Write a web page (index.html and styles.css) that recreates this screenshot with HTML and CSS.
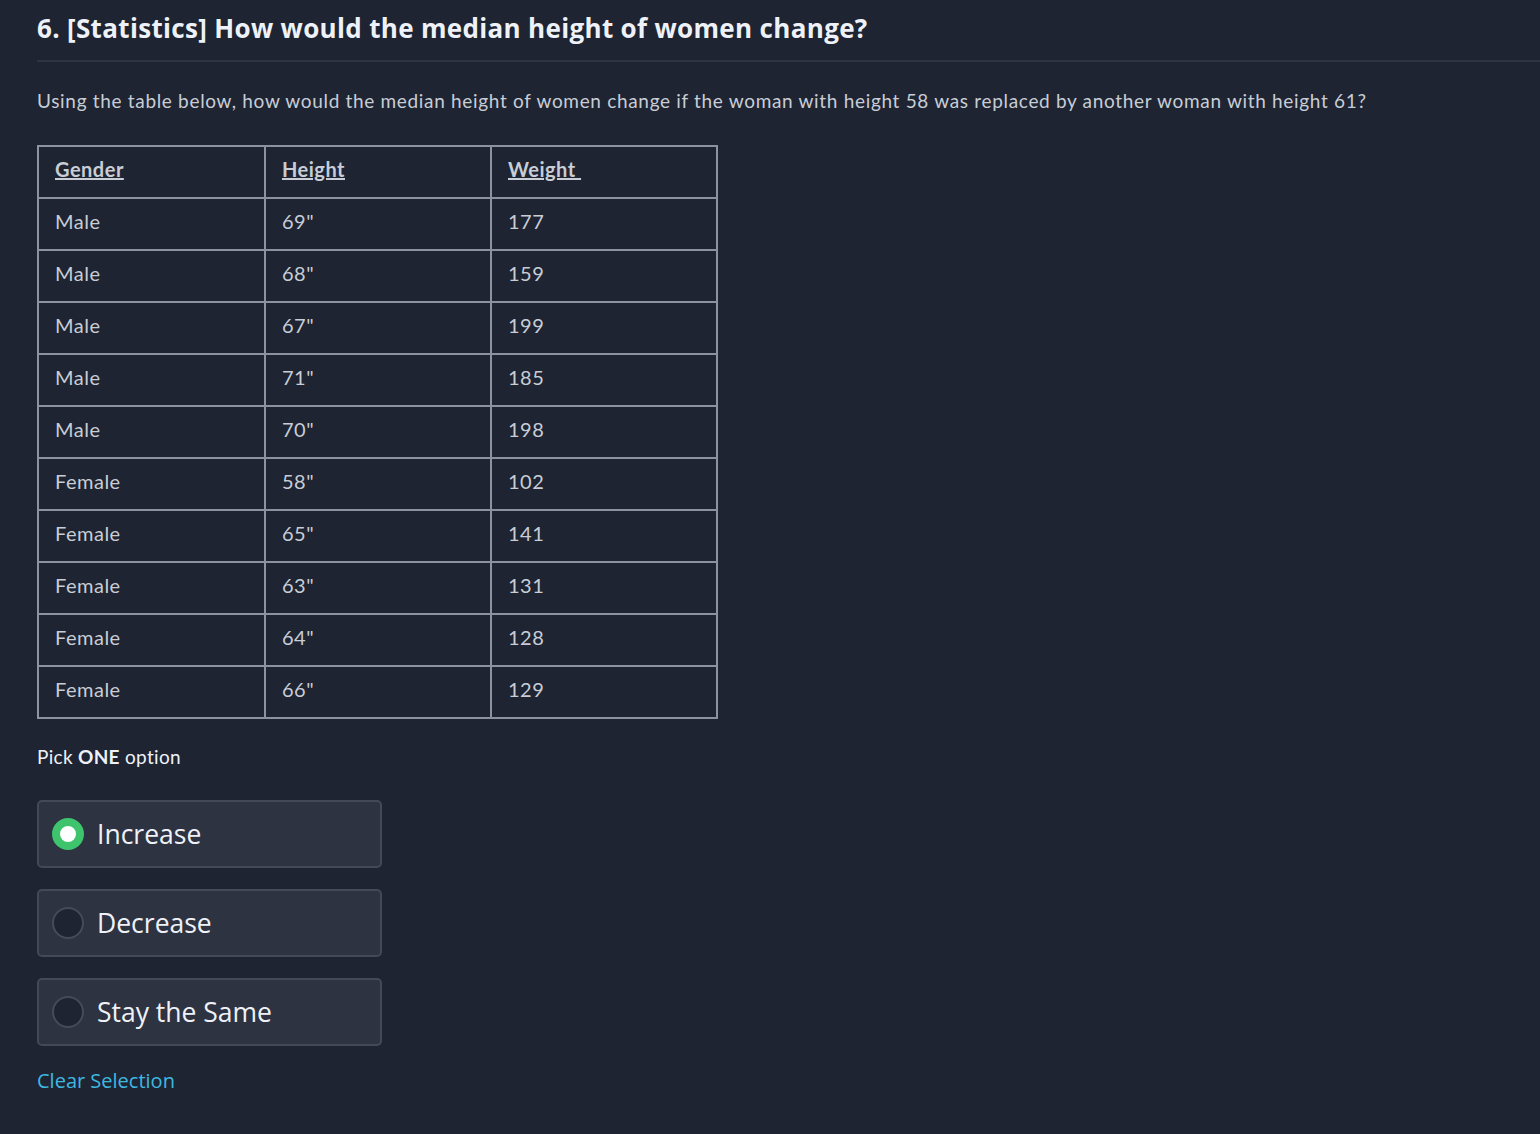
FILE: index.html
```html
<!DOCTYPE html>
<html>
<head>
<meta charset="utf-8">
<link rel="stylesheet" href="styles.css">
</head>
<body>
<div class="page">
  <h1 class="title">6. [Statistics] How would the median height of women change?</h1>
  <div class="divider"></div>
  <p class="question">Using the table below, how would the median height of women change if the woman with height 58 was replaced by another woman with height 61?</p>
  <table class="data">
    <thead>
      <tr><th><u>Gender</u></th><th><u>Height</u></th><th><u>Weight&nbsp;</u></th></tr>
    </thead>
    <tbody>
      <tr><td>Male</td><td>69"</td><td>177</td></tr>
      <tr><td>Male</td><td>68"</td><td>159</td></tr>
      <tr><td>Male</td><td>67"</td><td>199</td></tr>
      <tr><td>Male</td><td>71"</td><td>185</td></tr>
      <tr><td>Male</td><td>70"</td><td>198</td></tr>
      <tr><td>Female</td><td>58"</td><td>102</td></tr>
      <tr><td>Female</td><td>65"</td><td>141</td></tr>
      <tr><td>Female</td><td>63"</td><td>131</td></tr>
      <tr><td>Female</td><td>64"</td><td>128</td></tr>
      <tr><td>Female</td><td>66"</td><td>129</td></tr>
    </tbody>
  </table>
  <div class="pick">Pick <b>ONE</b> option</div>
  <div class="options">
    <div class="option"><span class="radio selected"></span><span class="label">Increase</span></div>
    <div class="option"><span class="radio"></span><span class="label">Decrease</span></div>
    <div class="option"><span class="radio"></span><span class="label">Stay the Same</span></div>
  </div>
  <a class="clear">Clear Selection</a>
</div>
</body>
</html>
```
FILE: styles.css
```css
html, body {
  margin: 0;
  padding: 0;
  background: #1e2432;
}
.page {
  padding: 10px 0 0 37px;
  height: 1124px;
  overflow: hidden;
  font-family: Lato, "Liberation Sans", sans-serif;
}
.title {
  margin: 0;
  font-family: "Open Sans", sans-serif;
  font-weight: 700;
  font-size: 26px;
  line-height: 36px;
  color: #eef2f8;
  letter-spacing: 0.33px;
}
.divider {
  height: 2px;
  background: #2e3442;
  margin-top: 14px;
}
.question {
  margin: 25px 0 0 0;
  font-size: 19px;
  line-height: 28px;
  color: #c8cdd6;
  letter-spacing: 0.68px;
}
.data {
  margin-top: 30px;
  border-collapse: collapse;
  color: #c8cdd6;
  font-size: 20px;
  letter-spacing: 0.5px;
}
.data th, .data td {
  border: 2px solid #8b93a2;
  height: 44px;
  padding: 0 16px 6px 16px;
  text-align: left;
  font-weight: 400;
}
.data th {
  font-weight: 700;
}
.data th:nth-child(1), .data td:nth-child(1) { width: 193px; }
.data th:nth-child(2), .data td:nth-child(2) { width: 192px; }
.data th:nth-child(3), .data td:nth-child(3) { width: 192px; }
.pick {
  margin-top: 25px;
  font-size: 19px;
  line-height: 26px;
  color: #eef2f8;
  letter-spacing: 0.3px;
}
.pick b { font-weight: 700; }
.options {
  margin-top: 30px;
  display: flex;
  flex-direction: column;
  gap: 21px;
  width: 345px;
}
.option {
  box-sizing: border-box;
  height: 68px;
  border: 2px solid #434958;
  border-radius: 5px;
  background: #2e3341;
  display: flex;
  align-items: center;
  padding-left: 13px;
}
.radio {
  box-sizing: border-box;
  width: 32px;
  height: 32px;
  border-radius: 50%;
  border: 2px solid #454b59;
  background: #1e2432;
  flex: none;
}
.radio.selected {
  border: 8px solid #3ec46d;
  background: #ffffff;
}
.label {
  margin-left: 13px;
  font-family: "Open Sans", sans-serif;
  font-size: 26.5px;
  color: #eef2f8;
}
.clear {
  display: block;
  margin-top: 21px;
  font-family: "Open Sans", sans-serif;
  font-size: 20px;
  color: #3fb8e0;
}
```
